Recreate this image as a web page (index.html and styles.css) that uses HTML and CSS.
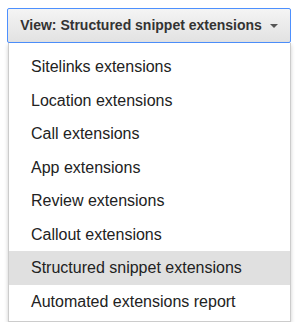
FILE: index.html
```html
<!DOCTYPE html>
<html lang="en">
<head>
  <meta charset="UTF-8" />
  <title>View menu</title>
  <link rel="stylesheet" href="styles.css">
</head>
<body>

  <!-- view selector -->
  <div class="view-select">
    <button class="view-button">View: Structured snippet extensions <span class="caret"></span></button>

    <ul class="view-menu">
      <li>Sitelinks extensions</li>
      <li>Location extensions</li>
      <li>Call extensions</li>
      <li>App extensions</li>
      <li>Review extensions</li>
      <li>Callout extensions</li>
      <li class="selected">Structured snippet extensions</li>
      <li>Automated extensions report</li>
    </ul>
  </div>

</body>
</html>
```

FILE: styles.css
```css
body {
  margin: 0;
  padding: 8px 0 0 7px;
  background: #fff;
  font-family: 'Liberation Sans', Arial, sans-serif;
  color: #222;
}

.view-select {
  width: 284px;
}

.view-button {
  display: block;
  width: 284px;
  height: 35px;
  margin: 0;
  padding: 0 0 2px;
  background: linear-gradient(#f4f4f4, #e2e2e2);
  border: 1px solid #4d90fe;
  border-radius: 2px;
  font-family: 'Liberation Sans', Arial, sans-serif;
  font-size: 14px;
  font-weight: bold;
  color: #333;
  text-align: center;
}

.caret {
  display: inline-block;
  width: 0;
  height: 0;
  margin-left: 4px;
  vertical-align: 2px;
  border-left: 4px solid transparent;
  border-right: 4px solid transparent;
  border-top: 4px solid #555;
}

.view-menu {
  list-style: none;
  margin: 0 0 0 1px;
  padding: 7px 0 3px;
  width: 283px;
  background: #fff;
  border-left: 1px solid #ccc;
  border-right: 1px solid #ccc;
  border-bottom: 1px solid #ccc;
  box-shadow: 0 2px 4px rgba(0, 0, 0, 0.2);
  box-sizing: border-box;
}

.view-menu li {
  height: 33.5px;
  line-height: 33px;
  padding-left: 22px;
  font-size: 16px;
  color: #222;
}

.view-menu li.selected {
  background: #e0e0e0;
}
```
